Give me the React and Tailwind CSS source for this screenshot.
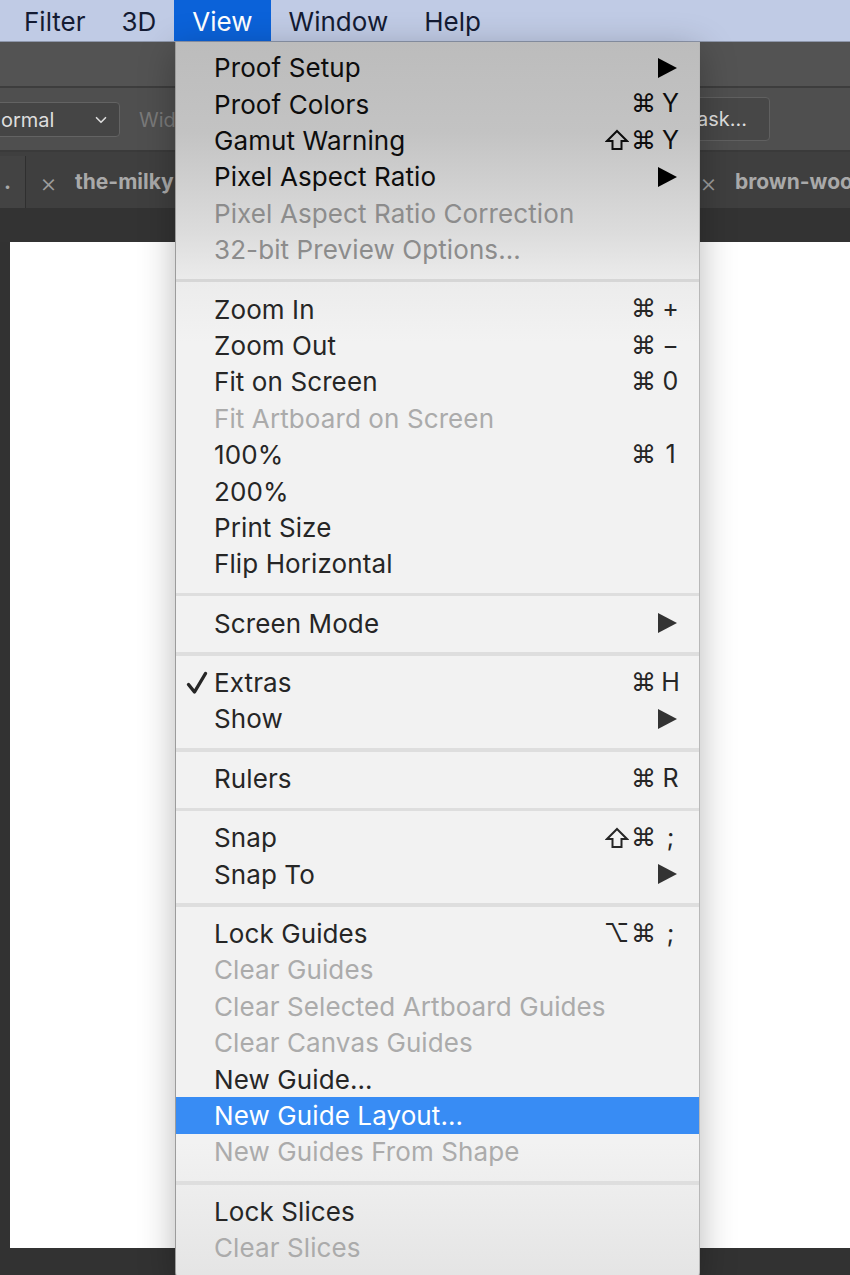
import { ChevronDown } from "lucide-react";

const sections = [
	[
		{ label: "Proof Setup", sub: true },
		{ label: "Proof Colors", keys: ["⌘", "Y"] },
		{ label: "Gamut Warning", keys: ["shift", "⌘", "Y"] },
		{ label: "Pixel Aspect Ratio", sub: true },
		{ label: "Pixel Aspect Ratio Correction", off: true },
		{ label: "32-bit Preview Options...", off: true }
	],
	[
		{ label: "Zoom In", keys: ["⌘", "+"] },
		{ label: "Zoom Out", keys: ["⌘", "−"] },
		{ label: "Fit on Screen", keys: ["⌘", "0"] },
		{ label: "Fit Artboard on Screen", off: true },
		{ label: "100%", keys: ["⌘", "1"] },
		{ label: "200%" },
		{ label: "Print Size" },
		{ label: "Flip Horizontal" }
	],
	[{ label: "Screen Mode", sub: true }],
	[
		{ label: "Extras", checked: true, keys: ["⌘", "H"] },
		{ label: "Show", sub: true }
	],
	[{ label: "Rulers", keys: ["⌘", "R"] }],
	[
		{ label: "Snap", keys: ["shift", "⌘", ";"] },
		{ label: "Snap To", sub: true }
	],
	[
		{ label: "Lock Guides", keys: ["⌥", "⌘", ";"] },
		{ label: "Clear Guides", off: true },
		{ label: "Clear Selected Artboard Guides", off: true },
		{ label: "Clear Canvas Guides", off: true },
		{ label: "New Guide..." },
		{ label: "New Guide Layout...", active: true },
		{ label: "New Guides From Shape", off: true }
	],
	[
		{ label: "Lock Slices" },
		{ label: "Clear Slices", off: true }
	]
];

const font = "font-['Inter','DejaVu_Sans',sans-serif]";

// shift key glyph, outlined up arrow
function ShiftGlyph({ color }) {
	return (
		<svg width="24" height="22" viewBox="0 0 24 22">
			<path
				d="M12 2 L22 12 L16.5 12 L16.5 20 L7.5 20 L7.5 12 L2 12 Z"
				fill="none"
				stroke={color}
				strokeWidth="2"
				strokeLinejoin="miter"
			/>
		</svg>
	);
}

function MenuItem({ item, top }) {
	let color = top ? "text-[#0d0d0d]" : "text-[#262626]";
	if (item.off) color = top ? "text-[#8c8c8c]" : "text-[#ababab]";
	if (item.active) color = "text-white";
	const ink = top ? "#0d0d0d" : "#262626";

	return (
		<div
			className={`relative flex h-[36.4px] items-center pl-[38px] pr-[15px] text-[26px] ${color} ${
				item.active ? "bg-[#388cf4]" : ""
			}`}
		>
			{item.checked && (
				<svg width="22" height="24" viewBox="0 0 22 24" className="absolute left-[10px] top-[7px]">
					<path d="M2.5 13.5 L8.5 21 L19.5 2.5" fill="none" stroke={ink} strokeWidth="3.4" strokeLinecap="round" strokeLinejoin="round" />
				</svg>
			)}
			<span className="flex-1 whitespace-nowrap tracking-[0.1px]">{item.label}</span>
			{item.keys && (
				<span className="flex items-center text-[25px]">
					{item.keys.map((k, i) => (
						<span key={i} className="flex w-[27px] justify-center">
							{k === "shift" ? <ShiftGlyph color={ink} /> : k}
						</span>
					))}
				</span>
			)}
			{item.sub && (
				<svg width="19" height="20" viewBox="0 0 19 20" className="mr-[7px]">
					<polygon points="0,0 19,10 0,20" fill={top ? "#000" : "#333"} />
				</svg>
			)}
		</div>
	);
}

function Separator({ top }) {
	return (
		<div className="h-[23px] pt-[11px]">
			<div className={`h-[3.5px] ${top ? "bg-[#d6d6d6]" : "bg-[#dedede]"}`} />
		</div>
	);
}

function ViewMenu() {
	return (
		<div
			className={`absolute left-[175px] top-[42px] w-[525px] h-[1240px] overflow-hidden rounded-b-[10px] border-l border-r border-l-[#9c9c9c] border-r-[#b8b8b8] bg-[linear-gradient(to_bottom,#bcbcbc_0px,#c3c3c3_90px,#dcdcdc_190px,#ececec_240px,#f2f2f2_300px,#f2f2f2_1100px,#e4e4e4_100%)] pt-[7.5px] shadow-[0_8px_36px_rgba(0,0,0,0.28)] ${font}`}
		>
			{sections.map((sec, si) => (
				<div key={si}>
					{si > 0 && <Separator top={si === 1} />}
					{sec.map((item) => (
						<MenuItem key={item.label} item={item} top={si === 0} />
					))}
				</div>
			))}
		</div>
	);
}

export default function App() {
	const menus = ["Filter", "3D", "View", "Window", "Help"];

	return (
		<div className={`relative flex h-[1275px] w-[850px] flex-col overflow-hidden bg-[#323232] ${font}`}>
			{/* mac menu bar */}
			<div className="flex h-[42px] items-stretch border-b border-[#8e97ab] bg-[#c0cbe5] pl-[6px] text-[26px] text-[#141b33]">
				{menus.map((m) => (
					<div
						key={m}
						className={`flex items-center px-[18px] pt-[2px] ${
							m === "View" ? "bg-[#0b62d9] text-white" : ""
						}`}
					>
						{m}
					</div>
				))}
			</div>

			{/* app bar */}
			<div className="h-[46px] border-b-2 border-[#3d3d3d] bg-[#535353]" />

			{/* options bar */}
			<div className="flex h-[64px] items-center border-b-2 border-[#3a3a3a] bg-[#4f4f4f]">
				<div className="ml-[-12px] flex h-[35px] w-[132px] items-center justify-between rounded-[4px] border border-[#636363] bg-[#454545] pl-[12px] pr-[9px] pt-[2px] text-[20px] text-[#dedede]">
					<span>ormal</span>
					<ChevronDown size={18} strokeWidth={2.2} color="#dcdcdc" />
				</div>
				<span className="ml-[19px] pt-[2px] text-[20px] text-[#7a7a7a]">Wid</span>
				<div className="ml-auto mr-[80px] flex h-[44px] w-[140px] items-center justify-end rounded-[4px] border border-[#606060] bg-[#474747] pr-[22px] text-[20px] text-[#dedede]">
					ask...
				</div>
			</div>

			{/* document tabs */}
			<div className="flex h-[56px] items-stretch bg-[#3f3f3f] pt-[4px] text-[21px] font-bold text-[#a9a9a9]">
				<div className="flex w-[26px] items-center border-r border-[#2f2f2f] bg-[#434343] pl-[4px]">.</div>
				<div className="flex items-center pl-[14px]">
					<span className="text-[26px] font-light text-[#9c9c9c]">×</span>
					<span className="ml-[18px]">the-milky</span>
				</div>
				<div className="ml-auto flex w-[150px] items-center overflow-hidden">
					<span className="text-[26px] font-light text-[#9c9c9c]">×</span>
					<span className="ml-[18px] whitespace-nowrap">brown-woo</span>
				</div>
			</div>

			<div className="h-[34px] bg-[#333333]" />

			{/* canvas */}
			<div className="flex flex-1 pl-[10px]">
				<div className="flex-1 bg-white" />
			</div>
			<div className="h-[27px] bg-[#323232]" />

			<ViewMenu />
		</div>
	);
}
